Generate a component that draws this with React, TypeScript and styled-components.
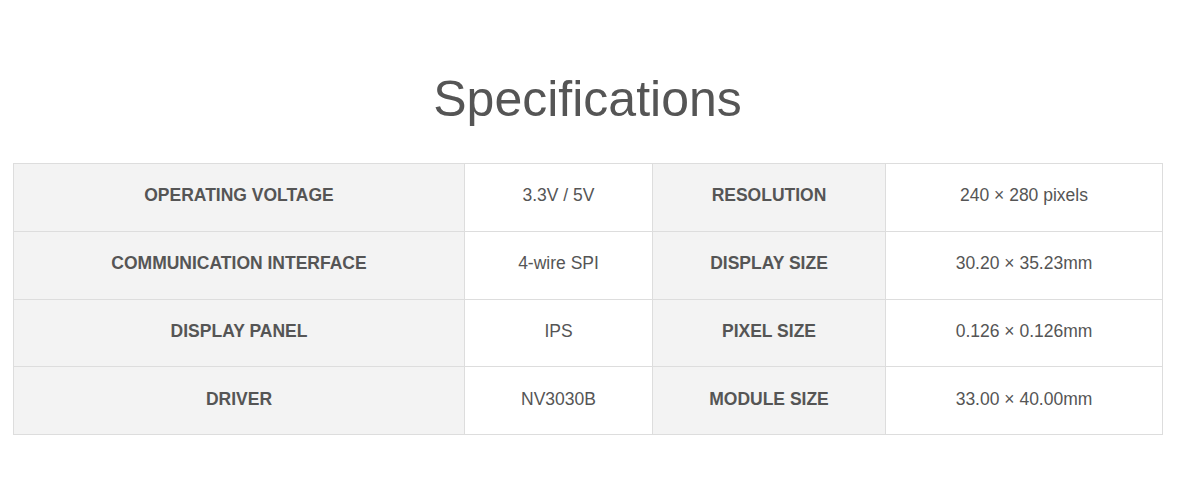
import styled, { createGlobalStyle } from 'styled-components';

const GlobalStyle = createGlobalStyle`
  body {
    margin: 0;
    background: #fff;
    font-family: 'Liberation Sans', Arial, sans-serif;
  }
`;

const Section = styled.section`
  padding: 70px 20px 0 13px;
`;

const Title = styled.h2`
  margin: 0 0 35px;
  text-align: center;
  font-size: 50px;
  line-height: 58px;
  font-weight: 400;
  color: #555;
`;

const Table = styled.table`
  width: 1149px;
  border-collapse: collapse;
  table-layout: fixed;
`;

const Col = styled.col<{ $w: number }>`
  width: ${(p) => p.$w}px;
`;

const Cell = styled.td<{ $head?: boolean }>`
  height: 63.75px;
  padding: 0 10px 3px;
  border: 1px solid #ddd;
  text-align: center;
  vertical-align: middle;
  font-size: 17.5px;
  color: #555;
  font-weight: ${(p) => (p.$head ? 700 : 400)};
  background: ${(p) => (p.$head ? '#f3f3f3' : '#fff')};
`;

const SPECS = [
  ['OPERATING VOLTAGE', '3.3V / 5V', 'RESOLUTION', '240 × 280 pixels'],
  ['COMMUNICATION INTERFACE', '4-wire SPI', 'DISPLAY SIZE', '30.20 × 35.23mm'],
  ['DISPLAY PANEL', 'IPS', 'PIXEL SIZE', '0.126 × 0.126mm'],
  ['DRIVER', 'NV3030B', 'MODULE SIZE', '33.00 × 40.00mm'],
];

export default function App() {
  return (
    <>
      <GlobalStyle />
      <Section>
        <Title>Specifications</Title>
        <Table>
          <colgroup>
            <Col $w={451} />
            <Col $w={188} />
            <Col $w={233} />
            <Col $w={277} />
          </colgroup>
          <tbody>
            {SPECS.map(([k1, v1, k2, v2]) => (
              <tr key={k1}>
                <Cell $head>{k1}</Cell>
                <Cell>{v1}</Cell>
                <Cell $head>{k2}</Cell>
                <Cell>{v2}</Cell>
              </tr>
            ))}
          </tbody>
        </Table>
      </Section>
    </>
  );
}
